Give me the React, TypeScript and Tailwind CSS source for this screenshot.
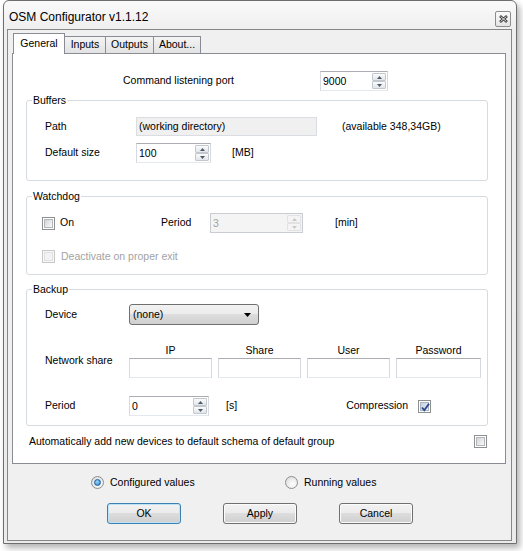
import type { ReactNode } from 'react';

const btnFace =
  'bg-[linear-gradient(to_bottom,#f2f2f2_0%,#ebebeb_50%,#dddddd_50%,#cfcfcf_100%)]';

function SpinArrows({ disabled }: { disabled?: boolean }) {
  const part = disabled
    ? 'flex h-[8px] w-[14px] items-center justify-center rounded-[1px] border border-[#e2e2e2] bg-[#f4f4f4]'
    : 'flex h-[8px] w-[14px] items-center justify-center rounded-[1px] border border-[#c3c8ce] bg-[linear-gradient(to_bottom,#fbfbfb,#e2e5e9)]';
  const fill = disabled ? '#c9c9c9' : '#4f5a68';
  return (
    <span className="my-[1px] mr-[1px] flex shrink-0 flex-col">
      <span className={part}>
        <svg width="5" height="3" viewBox="0 0 5 3">
          <path d="M0 3 L2.5 0 L5 3Z" fill={fill} />
        </svg>
      </span>
      <span className={part}>
        <svg width="5" height="3" viewBox="0 0 5 3">
          <path d="M0 0 L5 0 L2.5 3Z" fill={fill} />
        </svg>
      </span>
    </span>
  );
}

function Field({
  className,
  value,
  spin,
  disabled,
  readOnly,
}: {
  className: string;
  value?: string;
  spin?: boolean;
  disabled?: boolean;
  readOnly?: boolean;
}) {
  const look = disabled
    ? 'border-[#c9ccd1] bg-[#f4f4f4] text-[#a3a3a3]'
    : readOnly
      ? 'border-[#dadde2] bg-[#f0f0f0] text-black'
      : 'border-[#abadb3] border-x-[#d6d9de] border-b-[#e3e9ef] bg-white text-black';
  return (
    <span className={`flex shrink-0 items-stretch border ${look} ${className}`}>
      <span className="flex flex-1 items-center pl-[2px] leading-[13px]">{value}</span>
      {spin && <SpinArrows disabled={disabled} />}
    </span>
  );
}

function Check({ checked, disabled }: { checked?: boolean; disabled?: boolean }) {
  return (
    <span
      className={`relative flex h-[13px] w-[13px] shrink-0 items-center justify-center border ${
        disabled ? 'border-[#c8c8c8] bg-[#f7f7f7]' : 'border-[#8e8f8f] bg-white'
      }`}
    >
      <span
        className={`h-[9px] w-[9px] border ${
          disabled
            ? 'border-[#e1e1e1] bg-[#f2f2f2]'
            : checked
              ? 'border-[#a9b4c4] bg-[linear-gradient(135deg,#c7d0dd,#eef1f5)]'
              : 'border-[#b3b6ba] bg-[linear-gradient(135deg,#d2d4d7,#fafafa)]'
        }`}
      />
      {checked && (
        <svg className="absolute left-[1px] top-[1px]" width="11" height="11" viewBox="0 0 11 11">
          <path d="M2 5.5 L4.3 8.2 L9 1.8" fill="none" stroke="#2c4c8e" strokeWidth="1.9" />
        </svg>
      )}
    </span>
  );
}

function Radio({ selected }: { selected?: boolean }) {
  return (
    <span className="flex h-[13px] w-[13px] shrink-0 items-center justify-center rounded-full border border-[#8e8f8f] bg-[radial-gradient(circle_at_60%_65%,#ffffff,#d6d7d9)]">
      {selected && (
        <span className="h-[7px] w-[7px] rounded-full border border-[#1f5f9e] bg-[radial-gradient(circle_at_40%_35%,#9adcfb,#2a78c5)]" />
      )}
    </span>
  );
}

function Group({ title, className, children }: { title: string; className: string; children: ReactNode }) {
  return (
    <div className={`relative ml-[13px] w-[462px] rounded-[3px] border border-[#d5dbe0] ${className}`}>
      <span className="absolute left-[5px] top-[-7px] bg-white px-[1px] leading-[13px]">{title}</span>
      {children}
    </div>
  );
}

function Button({ label, primary }: { label: string; primary?: boolean }) {
  return (
    <span
      className={`flex h-[21px] w-[74px] items-center justify-center rounded-[3px] border ${btnFace} ${
        primary ? 'border-[#3c7fb1] shadow-[inset_0_0_0_1px_#bfe3f6]' : 'border-[#707070] shadow-[inset_0_0_0_1px_#fbfbfb]'
      }`}
    >
      {label}
    </span>
  );
}

export default function App() {
  return (
    <div className="h-[551px] w-[523px] overflow-hidden bg-white font-['Liberation_Sans',Arial,sans-serif] text-[10.5px] text-black">
      <div className="ml-[3px] flex h-[544px] w-[514px] flex-col rounded-t-[6px] border border-[#6e6e6e] bg-[linear-gradient(to_bottom,#fafafa,#eeeeee_30px,#ebebeb)] shadow-[3px_4px_6px_rgba(0,0,0,0.3)]">
        {/* title bar */}
        <div className="flex h-[28px] shrink-0 items-start justify-between px-[5px] pt-[10px]">
          <span className="text-[12px] leading-[13px]">OSM Configurator v1.1.12</span>
          <span className="flex h-[16px] w-[16px] items-center justify-center rounded-[2px] border border-[#8c8c8c] bg-[linear-gradient(to_bottom,#fbfbfb,#e4e4e4)]">
            <svg width="9" height="8" viewBox="0 0 9 8">
              <path d="M1 1 L8 7 M8 1 L1 7" stroke="#3a3a3a" strokeWidth="2.6" />
              <path d="M1.6 1.5 L7.4 6.5 M7.4 1.5 L1.6 6.5" stroke="#f4f4f4" strokeWidth="0.9" />
            </svg>
          </span>
        </div>

        {/* client area */}
        <div className="ml-[3px] flex h-[512px] w-[505px] flex-col border border-[#868686] bg-[#f0f0f0]">
          {/* tabs */}
          <div className="ml-[5px] mt-[3px] flex h-[20px] shrink-0 items-end">
            <span className="relative -mb-px flex h-[21px] w-[52px] items-center justify-center border border-b-0 border-[#898c95] bg-white">
              General
            </span>
            <span className="flex h-[17px] w-[41px] items-center justify-center border-r border-t border-[#898c95] bg-[linear-gradient(to_bottom,#f4f4f4,#e2e2e2)]">
              Inputs
            </span>
            <span className="flex h-[17px] w-[48px] items-center justify-center border-r border-t border-[#898c95] bg-[linear-gradient(to_bottom,#f4f4f4,#e2e2e2)]">
              Outputs
            </span>
            <span className="flex h-[17px] w-[47px] items-center justify-center border-r border-t border-[#898c95] bg-[linear-gradient(to_bottom,#f4f4f4,#e2e2e2)]">
              About...
            </span>
          </div>

          {/* tab page */}
          <div className="ml-[4px] flex h-[411px] w-[494px] shrink-0 flex-col border border-[#898c95] bg-white">
            <div className="mt-[17px] flex h-[20px] items-center">
              <span className="ml-[110px] w-[197px]">Command listening port</span>
              <Field className="h-[20px] w-[68px]" value="9000" spin />
            </div>

            <Group title="Buffers" className="mt-[9px] h-[81px]">
              <div className="mt-[16px] flex h-[19px] items-center pl-[18px]">
                <span className="w-[91px]">Path</span>
                <Field className="h-[19px] w-[181px]" value="(working directory)" readOnly />
                <span className="ml-[25px]">(available 348,34GB)</span>
              </div>
              <div className="mt-[7px] flex h-[20px] items-center pl-[18px]">
                <span className="w-[91px]">Default size</span>
                <Field className="h-[20px] w-[75px]" value="100" spin />
                <span className="ml-[21px]">[MB]</span>
              </div>
            </Group>

            <Group title="Watchdog" className="mt-[15px] h-[79px]">
              <div className="mt-[16px] flex h-[20px] items-center pl-[15px]">
                <span className="flex w-[119px] items-center">
                  <Check />
                  <span className="ml-[5px]">On</span>
                </span>
                <span className="w-[49px]">Period</span>
                <Field className="h-[20px] w-[93px]" value="3" spin disabled />
                <span className="ml-[32px]">[min]</span>
              </div>
              <div className="mt-[17px] flex h-[13px] items-center pl-[15px]">
                <Check disabled />
                <span className="ml-[6px] text-[#a3a3a3]">Deactivate on proper exit</span>
              </div>
            </Group>

            <Group title="Backup" className="mt-[14px] h-[137px]">
              <div className="mt-[14px] flex h-[21px] items-center pl-[18px]">
                <span className="w-[84px]">Device</span>
                <span className={`flex h-[21px] w-[130px] items-center justify-between rounded-[3px] border border-[#707070] pl-[3px] pr-[7px] ${btnFace}`}>
                  <span>(none)</span>
                  <svg width="7" height="4" viewBox="0 0 7 4">
                    <path d="M0 0 L7 0 L3.5 4Z" fill="#000" />
                  </svg>
                </span>
              </div>
              <div className="mt-[19px] flex pl-[18px]">
                <span className="flex w-[84px] items-center">Network share</span>
                <div className="grid grid-cols-[83px_83px_83px_85px] grid-rows-[14px_20px] gap-x-[6px]">
                  <span className="text-center leading-[13px]">IP</span>
                  <span className="text-center leading-[13px]">Share</span>
                  <span className="text-center leading-[13px]">User</span>
                  <span className="text-center leading-[13px]">Password</span>
                  <Field className="h-[20px] w-[83px]" />
                  <Field className="h-[20px] w-[83px]" />
                  <Field className="h-[20px] w-[83px]" />
                  <Field className="h-[20px] w-[85px]" />
                </div>
              </div>
              <div className="mt-[18px] flex h-[20px] items-center pl-[18px] pr-[56px]">
                <span className="w-[84px]">Period</span>
                <Field className="h-[20px] w-[80px]" value="0" spin />
                <span className="ml-[17px]">[s]</span>
                <span className="flex-1" />
                <span>Compression</span>
                <span className="ml-[10px]">
                  <Check checked />
                </span>
              </div>
            </Group>

            <div className="ml-[16px] mr-[18px] mt-[9px] flex h-[13px] items-center justify-between">
              <span>Automatically add new devices to default schema of default group</span>
              <Check />
            </div>
          </div>

          {/* view mode */}
          <div className="ml-[83px] mt-[12px] flex h-[13px] items-center">
            <span className="flex w-[194px] items-center">
              <Radio selected />
              <span className="ml-[6px]">Configured values</span>
            </span>
            <Radio />
            <span className="ml-[6px]">Running values</span>
          </div>

          <div className="ml-[99px] mt-[14px] flex gap-[42px]">
            <Button label="OK" primary />
            <Button label="Apply" />
            <Button label="Cancel" />
          </div>
        </div>
      </div>
    </div>
  );
}
